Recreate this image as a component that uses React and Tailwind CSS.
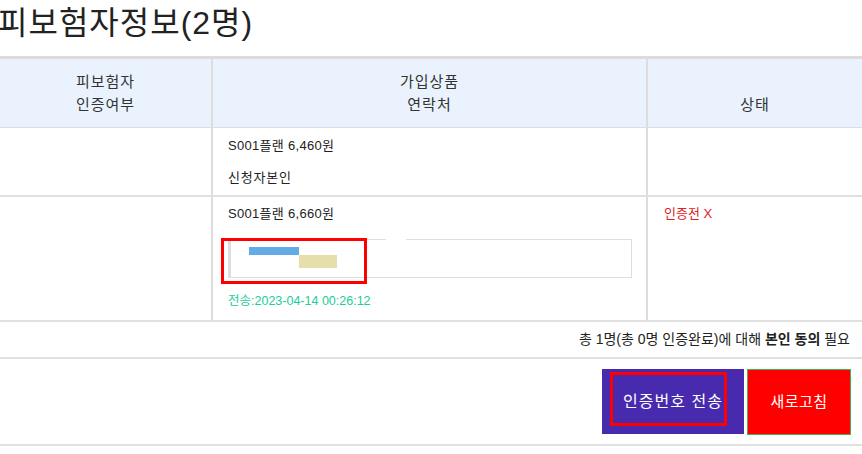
import React from 'react';

const font = { fontFamily: '"Liberation Sans", "Noto Sans CJK KR", sans-serif' };

export default function App() {
    return (
        <div className="w-[862px] h-[454px] bg-white text-[#222] overflow-hidden" style={font}>
            {/* Title */}
            <div className="h-[56px] text-[32px] leading-[46px] tracking-[1px] text-[#222] -ml-[2px] whitespace-nowrap">피보험자정보(2명)</div>

            {/* Table */}
            <div className="border-t-[3px] border-[#dcdcdc]">
                {/* Header */}
                <div className="grid grid-cols-[213px_435px_1fr] bg-[#eaf3fd] border-b border-[#dddddd] h-[69px] text-[15px] leading-[23px] tracking-[1px] text-[#333]">
                    <div className="flex flex-col items-center justify-center border-r-2 border-[#dddddd]">
                        <span>피보험자</span>
                        <span>인증여부</span>
                    </div>
                    <div className="flex flex-col items-center justify-center border-r-2 border-[#dddddd]">
                        <span>가입상품</span>
                        <span>연락처</span>
                    </div>
                    <div className="flex flex-col items-center justify-center">
                        <span>&nbsp;</span>
                        <span>상태</span>
                    </div>
                </div>

                {/* Row 1 */}
                <div className="grid grid-cols-[213px_435px_1fr] border-b-2 border-[#e0e0e0] h-[69px] text-[13px]">
                    <div className="border-r-2 border-[#dddddd]"></div>
                    <div className="border-r-2 border-[#dddddd] pl-[15px] pt-[9px] flex flex-col gap-[14px] leading-[18px]">
                        <span className="tracking-[0.3px]">S001플랜 6,460원</span>
                        <span className="tracking-[0.8px]">신청자본인</span>
                    </div>
                    <div></div>
                </div>

                {/* Row 2 */}
                <div className="grid grid-cols-[213px_435px_1fr] border-b-2 border-[#e0e0e0] h-[125px] text-[13px]">
                    <div className="border-r-2 border-[#dddddd]"></div>
                    <div className="border-r-2 border-[#dddddd] pl-[15px] pt-[8px] flex flex-col leading-[18px]">
                        <span className="tracking-[0.3px]">S001플랜 6,660원</span>
                        <div className="relative mt-[16px] w-[404px] h-[39px] border border-l-[3px] border-[#dedede]">
                            <div className="absolute left-[155px] -top-px w-[20px] h-px bg-white"></div>
                            <div className="absolute left-[18px] top-[7px] w-[50px] h-[8px] bg-[#63abe6]"></div>
                            <div className="absolute left-[68px] top-[15px] w-[38px] h-[13px] bg-[#e6dfab]"></div>
                            <div className="absolute -left-[10px] -top-[2px] w-[146px] h-[46px] border-[3px] border-[#ff0000]"></div>
                        </div>
                        <span className="mt-[14px] text-[12.5px] text-[#22cc9a]">전송:2023-04-14 00:26:12</span>
                    </div>
                    <div className="pl-[16px] pt-[8px] leading-[18px] text-[#e0201c]">인증전 X</div>
                </div>

                {/* Summary */}
                <div className="h-[37px] flex items-center justify-end pr-[12px] border-b-2 border-[#e0e0e0] text-[14px]">
                    <span>총 1명(총 0명 인증완료)에 대해 <b>본인 동의</b> 필요</span>
                </div>

                {/* Buttons */}
                <div className="h-[87px] flex justify-end items-start pt-[10px] pr-[11px] gap-[3px] border-b-2 border-[#e0e0e0]">
                    <button className="relative w-[142px] h-[65px] bg-[#482aae] text-white text-[16px] tracking-[1px]">
                        인증번호 전송
                        <span className="absolute left-[8px] top-[3px] w-[117px] h-[54px] border-[3px] border-[#ff0000]"></span>
                    </button>
                    <button className="w-[104px] h-[66px] bg-[#ff0000] border border-[#4caf50] text-white text-[15px] tracking-[0.5px]">
                        새로고침
                    </button>
                </div>
            </div>
        </div>
    );
}
